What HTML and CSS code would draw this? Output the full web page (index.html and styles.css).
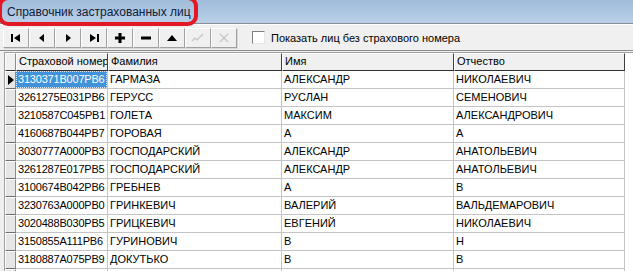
FILE: index.html
```html
<!DOCTYPE html>
<html lang="ru">
<head>
  <meta charset="UTF-8">
  <title>Справочник застрахованных лиц</title>
  <link rel="stylesheet" href="styles.css">
</head>
<body>
  <div class="window">
    <div class="titlebar">
      <span class="title">Справочник застрахованных лиц</span>
    </div>
    <!-- красная пометка поверх заголовка -->
    <div class="mark"></div>

    <div class="toolbar">
      <div class="navigator">
        <button class="nav-btn" title="Первая">
          <svg width="12" height="10" viewBox="0 0 12 10"><rect x="1" y="1" width="2" height="8"/><path d="M10 1 L4 5 L10 9 Z"/></svg>
        </button>
        <button class="nav-btn" title="Предыдущая">
          <svg width="12" height="10" viewBox="0 0 12 10"><path d="M8 1 L3 5 L8 9 Z"/></svg>
        </button>
        <button class="nav-btn" title="Следующая">
          <svg width="12" height="10" viewBox="0 0 12 10"><path d="M4 1 L9 5 L4 9 Z"/></svg>
        </button>
        <button class="nav-btn" title="Последняя">
          <svg width="12" height="10" viewBox="0 0 12 10"><path d="M2 1 L8 5 L2 9 Z"/><rect x="9" y="1" width="2" height="8"/></svg>
        </button>
        <button class="nav-btn" title="Добавить">
          <svg width="12" height="12" viewBox="0 0 12 12"><rect x="4.5" y="1" width="3" height="10"/><rect x="1" y="4.5" width="10" height="3"/></svg>
        </button>
        <button class="nav-btn" title="Удалить">
          <svg width="12" height="12" viewBox="0 0 12 12"><rect x="1" y="4.5" width="10" height="3"/></svg>
        </button>
        <button class="nav-btn" title="Изменить">
          <svg width="12" height="10" viewBox="0 0 12 10"><path d="M1 8 L6 2 L11 8 Z"/></svg>
        </button>
        <button class="nav-btn disabled" title="Сохранить">
          <svg width="14" height="10" viewBox="0 0 14 10"><path d="M1 8 L4 5 L6 7 L12 1" fill="none" stroke="#c4c4c4" stroke-width="1.2"/></svg>
        </button>
        <button class="nav-btn disabled" title="Отменить">
          <svg width="12" height="12" viewBox="0 0 12 12"><path d="M2 2 L10 10 M10 2 L2 10" fill="none" stroke="#c4c4c4" stroke-width="1.2"/></svg>
        </button>
      </div>
      <label class="check">
        <span class="check-box"></span>
        Показать лиц без страхового номера
      </label>
    </div>

    <div class="grid">
      <div class="row head">
        <div class="ind"></div>
        <div class="cell">Страховой номер</div>
        <div class="cell">Фамилия</div>
        <div class="cell">Имя</div>
        <div class="cell">Отчество</div>
      </div>
      <div class="row">
        <div class="ind current"><svg width="6" height="10" viewBox="0 0 6 10"><path d="M0 0 L6 5 L0 10 Z"/></svg></div>
        <div class="cell selected"><span>3130371B007PB6</span></div>
        <div class="cell">ГАРМАЗА</div>
        <div class="cell">АЛЕКСАНДР</div>
        <div class="cell">НИКОЛАЕВИЧ</div>
      </div>
      <div class="row">
        <div class="ind"></div>
        <div class="cell">3261275E031PB6</div>
        <div class="cell">ГЕРУСС</div>
        <div class="cell">РУСЛАН</div>
        <div class="cell">СЕМЕНОВИЧ</div>
      </div>
      <div class="row">
        <div class="ind"></div>
        <div class="cell">3210587C045PB1</div>
        <div class="cell">ГОЛЕТА</div>
        <div class="cell">МАКСИМ</div>
        <div class="cell">АЛЕКСАНДРОВИЧ</div>
      </div>
      <div class="row">
        <div class="ind"></div>
        <div class="cell">4160687B044PB7</div>
        <div class="cell">ГОРОВАЯ</div>
        <div class="cell">А</div>
        <div class="cell">А</div>
      </div>
      <div class="row">
        <div class="ind"></div>
        <div class="cell">3030777A000PB3</div>
        <div class="cell">ГОСПОДАРСКИЙ</div>
        <div class="cell">АЛЕКСАНДР</div>
        <div class="cell">АНАТОЛЬЕВИЧ</div>
      </div>
      <div class="row">
        <div class="ind"></div>
        <div class="cell">3261287E017PB5</div>
        <div class="cell">ГОСПОДАРСКИЙ</div>
        <div class="cell">АЛЕКСАНДР</div>
        <div class="cell">АНАТОЛЬЕВИЧ</div>
      </div>
      <div class="row">
        <div class="ind"></div>
        <div class="cell">3100674B042PB6</div>
        <div class="cell">ГРЕБНЕВ</div>
        <div class="cell">А</div>
        <div class="cell">В</div>
      </div>
      <div class="row">
        <div class="ind"></div>
        <div class="cell">3230763A000PB0</div>
        <div class="cell">ГРИНКЕВИЧ</div>
        <div class="cell">ВАЛЕРИЙ</div>
        <div class="cell">ВАЛЬДЕМАРОВИЧ</div>
      </div>
      <div class="row">
        <div class="ind"></div>
        <div class="cell">3020488B030PB5</div>
        <div class="cell">ГРИЦКЕВИЧ</div>
        <div class="cell">ЕВГЕНИЙ</div>
        <div class="cell">НИКОЛАЕВИЧ</div>
      </div>
      <div class="row">
        <div class="ind"></div>
        <div class="cell">3150855A111PB6</div>
        <div class="cell">ГУРИНОВИЧ</div>
        <div class="cell">В</div>
        <div class="cell">Н</div>
      </div>
      <div class="row">
        <div class="ind"></div>
        <div class="cell">3180887A075PB9</div>
        <div class="cell">ДОКУТЬКО</div>
        <div class="cell">В</div>
        <div class="cell">В</div>
      </div>
      <div class="row">
        <div class="ind"></div>
        <div class="cell"></div>
        <div class="cell"></div>
        <div class="cell"></div>
        <div class="cell"></div>
      </div>
    </div>
  </div>
</body>
</html>
```
FILE: styles.css
```css
body {
  margin: 0;
  padding: 0;
  width: 633px;
  height: 271px;
  overflow: hidden;
  background: #f0f0f0;
  font-family: "Liberation Sans", Arial, sans-serif;
  color: #000;
}

.window {
  position: relative;
  width: 633px;
  height: 271px;
  overflow: hidden;
}

.titlebar {
  height: 23px;
  display: flex;
  align-items: center;
  padding-left: 7px;
  background: linear-gradient(180deg, rgb(160, 188, 218) 0%, rgb(186, 208, 233) 100%);
  border-bottom: 1px solid #8a8f96;
}

.title {
  font-size: 12px;
  color: #10203a;
}

.mark {
  position: absolute;
  left: -2px;
  top: -4px;
  width: 192px;
  height: 22px;
  border: 4px solid rgb(226, 24, 36);
  border-radius: 10px;
}

.toolbar {
  height: 25px;
  display: flex;
  align-items: center;
  padding: 0 0 0 3px;
  background: #f0f0f0;
  border-top: 1px solid #fff;
  border-bottom: 1px solid #8c8c8c;
}

.navigator {
  display: flex;
}

.nav-btn {
  width: 26px;
  height: 20px;
  padding: 0;
  margin: 0;
  display: flex;
  align-items: center;
  justify-content: center;
  background: #f0f0f0;
  border-top: 1px solid #fff;
  border-left: 1px solid #fff;
  border-right: 1px solid #a0a0a0;
  border-bottom: 1px solid #a0a0a0;
  box-shadow: 1px 1px 0 #d8d8d8;
}

.nav-btn svg {
  fill: #000;
}

.check {
  display: flex;
  align-items: center;
  margin-left: 15px;
  font-size: 11px;
  gap: 6px;
}

.check-box {
  width: 11px;
  height: 11px;
  background: #fff;
  border-top: 1px solid #808080;
  border-left: 1px solid #808080;
  border-right: 1px solid #e8e8e8;
  border-bottom: 1px solid #e8e8e8;
}

.grid {
  margin: 1px 0 0 4px;
  width: 629px;
  background: #fff;
  border-top: 1px solid #a0a0a0;
  border-left: 1px solid #a0a0a0;
}

.row {
  display: grid;
  grid-template-columns: 11px 92px 174px 172px 171px;
  height: 18px;
  font-size: 11px;
}

.cell {
  box-sizing: border-box;
  height: 18px;
  padding: 2px 0 0 2px;
  white-space: nowrap;
  overflow: hidden;
  border-right: 1px solid #c4c4c4;
  border-bottom: 1px solid #c4c4c4;
}

/* номера плотнее, чтобы влезали в колонку */
.row .cell:nth-child(2) {
  letter-spacing: -0.2px;
}

.head .cell:nth-child(2) {
  letter-spacing: 0;
}

.ind {
  box-sizing: border-box;
  height: 18px;
  background: #e6e6e6;
  border-top: 1px solid #fff;
  border-left: 1px solid #fff;
  border-right: 1px solid #8c8c8c;
  border-bottom: 1px solid #6c6c6c;
}

.ind.current {
  display: flex;
  align-items: center;
  justify-content: center;
}

.head .cell {
  background: #f0f0f0;
  border-top: 1px solid #fff;
  border-left: 1px solid #fff;
  border-right: 1px solid #404040;
  border-bottom: 1px solid #303030;
  padding-top: 1px;
}

.head .ind {
  background: #f0f0f0;
  border-bottom: 1px solid #303030;
}

.cell.selected {
  padding: 0;
}

.cell.selected span {
  display: block;
  height: 17px;
  box-sizing: border-box;
  padding: 2px 0 0 2px;
  background: rgb(64, 146, 218);
  color: #fff;
  outline: 1px dotted #dbe9f6;
  outline-offset: -1px;
}
```
